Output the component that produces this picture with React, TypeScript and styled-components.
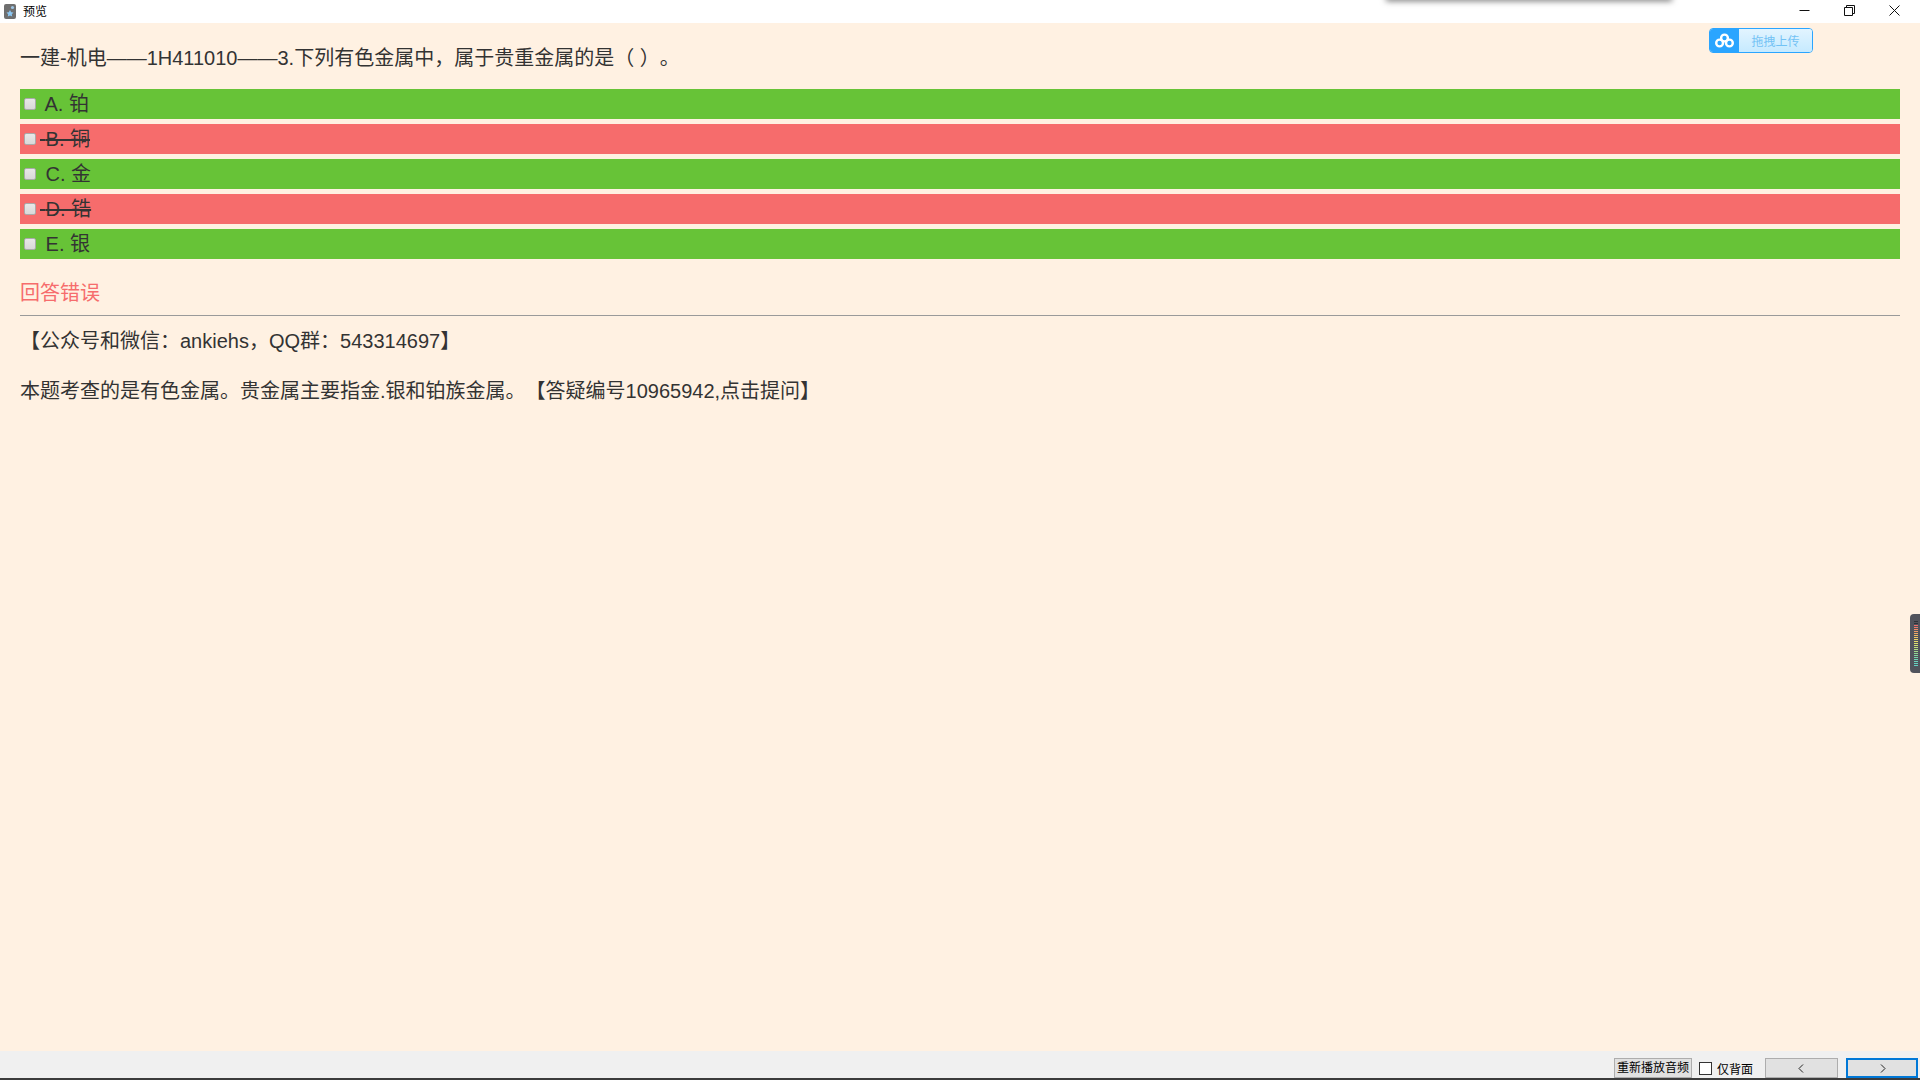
import React from 'react';
import styled, { createGlobalStyle } from 'styled-components';

const GlobalStyle = createGlobalStyle`
  html, body {
    margin: 0;
    padding: 0;
    height: 100%;
    overflow: hidden;
  }

  body {
    font-family: 'Liberation Sans', 'Noto Sans CJK SC', sans-serif;
    color: #333;
    text-spacing-trim: space-all;
  }
`;

const Window = styled.div`
  width: 1920px;
  height: 1080px;
  display: flex;
  flex-direction: column;
  position: relative;
  overflow: hidden;
  background: #fff1e2;
`;

const TitleBar = styled.header`
  height: 23px;
  flex: none;
  box-sizing: border-box;
  display: flex;
  align-items: center;
  background: #fff;
  padding: 0 3px 0 4px;
`;

const AppIcon = styled.svg`
  width: 12px;
  height: 15px;
  margin-right: 7px;
`;

const WindowTitle = styled.span`
  font-size: 12px;
  margin-bottom: 3px;
  color: #000;
`;

const WindowButtons = styled.div`
  margin-left: auto;
  display: flex;
  height: 100%;
`;

const WindowButton = styled.div`
  width: 45px;
  height: 20px;
  display: flex;
  align-items: center;
  justify-content: center;

  svg {
    width: 11px;
    height: 11px;
    stroke: #111;
    stroke-width: 1;
    fill: none;
  }
`;

const TopShadow = styled.div`
  position: absolute;
  top: -4px;
  left: 1387px;
  width: 284px;
  height: 4px;
  box-shadow: 0 0 6px 1px rgba(0, 0, 0, 0.55);
`;

const Content = styled.main`
  flex: 1;
  padding: 0 20px;
  min-height: 0;
`;

const Question = styled.p`
  margin: 0;
  padding-top: 22px;
  height: 66px;
  box-sizing: border-box;
  font-size: 20px;
  line-height: 26px;
`;

const Options = styled.div`
  display: flex;
  flex-direction: column;
  gap: 5px;
`;

const Option = styled.label<{ $correct: boolean }>`
  height: 30px;
  display: flex;
  align-items: center;
  background: ${({ $correct }) => ($correct ? '#67c337' : '#f66c6c')};
  font-size: 20px;
  line-height: 28px;
  color: #333;
`;

const Check = styled.span`
  width: 12px;
  height: 12px;
  margin: 0 4px;
  flex: none;
  box-sizing: border-box;
  border: 1px solid #aaa;
  border-radius: 2px;
  background: linear-gradient(#e8e8e8, #d9d9d9);
`;

const OptionText = styled.span<{ $struck: boolean }>`
  text-decoration: ${({ $struck }) => ($struck ? 'line-through' : 'none')};
  text-decoration-thickness: 2px;
  white-space: pre;
`;

const Verdict = styled.div`
  margin-top: 22px;
  height: 24px;
  font-size: 20px;
  line-height: 24px;
  color: #f66c6c;
`;

const Rule = styled.hr`
  margin: 10px 0 0;
  border: 0;
  border-top: 1px solid #9a9a9a;
`;

const Paragraph = styled.p`
  margin: 0;
  height: 50px;
  padding-top: 12px;
  box-sizing: border-box;
  font-size: 20px;
  line-height: 26px;
`;

const BottomBar = styled.footer`
  height: 27px;
  flex: none;
  display: flex;
  align-items: flex-end;
  justify-content: flex-end;
  background: #f0f0f0;
  border-bottom: 2px solid #3c3c3c;
`;

const ReplayButton = styled.button`
  width: 78px;
  height: 20px;
  margin-right: 7px;
  padding: 0;
  box-sizing: border-box;
  border: 1px solid #adadad;
  background: #e1e1e1;
  font-family: inherit;
  font-size: 12px;
  line-height: 18px;
  color: #000;
`;

const BackOnly = styled.label`
  display: flex;
  align-items: center;
  height: 20px;
  margin-right: 12px;
  font-size: 12px;
  color: #000;
`;

const BackBox = styled.span`
  width: 13px;
  height: 13px;
  box-sizing: border-box;
  margin-right: 5px;
  border: 1px solid #333;
  background: #fff;
`;

const NavButton = styled.button<{ $focused?: boolean }>`
  width: ${({ $focused }) => ($focused ? '72px' : '73px')};
  height: 20px;
  margin-right: ${({ $focused }) => ($focused ? '2px' : '8px')};
  padding: 0;
  display: flex;
  align-items: center;
  justify-content: center;
  box-sizing: border-box;
  border: ${({ $focused }) => ($focused ? '2px solid #0078d7' : '1px solid #adadad')};
  background: #e1e1e1;

  svg {
    width: 9px;
    height: 9px;
    stroke: #222;
    fill: none;
  }
`;

const UploadBadge = styled.div`
  position: absolute;
  top: 28px;
  left: 1709px;
  width: 104px;
  height: 25px;
  box-sizing: border-box;
  display: flex;
  border: 1px solid #2aa5ff;
  border-radius: 4px;
  overflow: hidden;
`;

const UploadIcon = styled.div`
  width: 29px;
  display: flex;
  align-items: center;
  justify-content: center;
  background: #2aa5ff;

  svg {
    width: 19px;
    height: 15px;
  }
`;

const UploadLabel = styled.div`
  flex: 1;
  display: flex;
  align-items: center;
  justify-content: center;
  background: linear-gradient(#e2f4ff, #c6eaff);
  color: #72c2f5;
  font-size: 12px;
`;

const SideMeter = styled.div`
  position: absolute;
  top: 614px;
  right: 0;
  width: 10px;
  height: 59px;
  box-sizing: border-box;
  padding: 7px 0 0 4px;
  display: flex;
  flex-direction: column;
  gap: 1px;
  background: #51535c;
  border-radius: 4px 0 0 4px;
`;

const MeterBar = styled.span`
  width: 4px;
  height: 1px;
`;

const meterColors = [
  '#2f3238', '#2f3238', '#f06c6c', '#f07c6a', '#f08c68', '#f09c66', '#f0ac64', '#f0bc64',
  '#f0c864', '#eed466', '#e8dc6a', '#dee06e', '#d0e074', '#c0de7a', '#b0dc82', '#a0da8a',
  '#90d894', '#84d69e', '#78d4a8', '#70d4b2', '#6ad2ba', '#66d2c0', '#62d0c4',
];

const options = [
  { text: 'A. 铂', correct: true },
  { text: 'B. 铜', correct: false },
  { text: 'C. 金', correct: true },
  { text: 'D. 锆', correct: false },
  { text: 'E. 银', correct: true },
];

export default function App() {
  return (
    <Window>
      <GlobalStyle />
      <TitleBar>
        <AppIcon viewBox="0 0 12 15">
          <rect width="12" height="15" rx="2" fill="#6f6f6f" />
          <circle cx="8.5" cy="3.5" r="1.6" fill="#9cc4e4" />
          <path d="M6 6l1.2 2.2 2.3.4-1.7 1.7.4 2.3L6 11.6l-2.2 1 .4-2.3-1.7-1.7 2.3-.4z" fill="#8cc8f4" />
        </AppIcon>
        <WindowTitle>预览</WindowTitle>
        <WindowButtons>
          <WindowButton>
            <svg viewBox="0 0 11 11"><path d="M0.5 5.5h10" /></svg>
          </WindowButton>
          <WindowButton>
            <svg viewBox="0 0 11 11"><path d="M.5 2.5h8v8h-8zM2.5 2.5v-2h8v8h-2" /></svg>
          </WindowButton>
          <WindowButton>
            <svg viewBox="0 0 11 11"><path d="M.5.5l10 10M10.5.5l-10 10" /></svg>
          </WindowButton>
        </WindowButtons>
      </TitleBar>
      <TopShadow />

      <Content>
        <Question>一建-机电——1H411010——3.下列有色金属中，属于贵重金属的是（ ）。</Question>
        <Options>
          {options.map((option) => (
            <Option key={option.text} $correct={option.correct}>
              <Check />
              <OptionText $struck={!option.correct}>{' '}{option.text}</OptionText>
            </Option>
          ))}
        </Options>
        <Verdict>回答错误</Verdict>
        <Rule />
        <Paragraph>【公众号和微信：ankiehs，QQ群：543314697】</Paragraph>
        <Paragraph>本题考查的是有色金属。贵金属主要指金.银和铂族金属。【答疑编号10965942,点击提问】</Paragraph>
      </Content>

      <BottomBar>
        <ReplayButton>重新播放音频</ReplayButton>
        <BackOnly>
          <BackBox />
          仅背面
        </BackOnly>
        <NavButton>
          <svg viewBox="0 0 9 9"><path d="M6 .5L2 4.5l4 4" /></svg>
        </NavButton>
        <NavButton $focused>
          <svg viewBox="0 0 9 9"><path d="M3 .5l4 4-4 4" /></svg>
        </NavButton>
      </BottomBar>

      <UploadBadge>
        <UploadIcon>
          <svg viewBox="0 0 19 15">
            <circle cx="9.5" cy="5" r="3.4" fill="none" stroke="#fff" strokeWidth="2.4" />
            <circle cx="4.6" cy="10" r="3.4" fill="none" stroke="#fff" strokeWidth="2.4" />
            <circle cx="14.4" cy="10" r="3.4" fill="none" stroke="#fff" strokeWidth="2.4" />
          </svg>
        </UploadIcon>
        <UploadLabel>拖拽上传</UploadLabel>
      </UploadBadge>

      <SideMeter>
        {meterColors.map((color, i) => (
          <MeterBar key={i} style={{ background: color }} />
        ))}
      </SideMeter>
    </Window>
  );
}
